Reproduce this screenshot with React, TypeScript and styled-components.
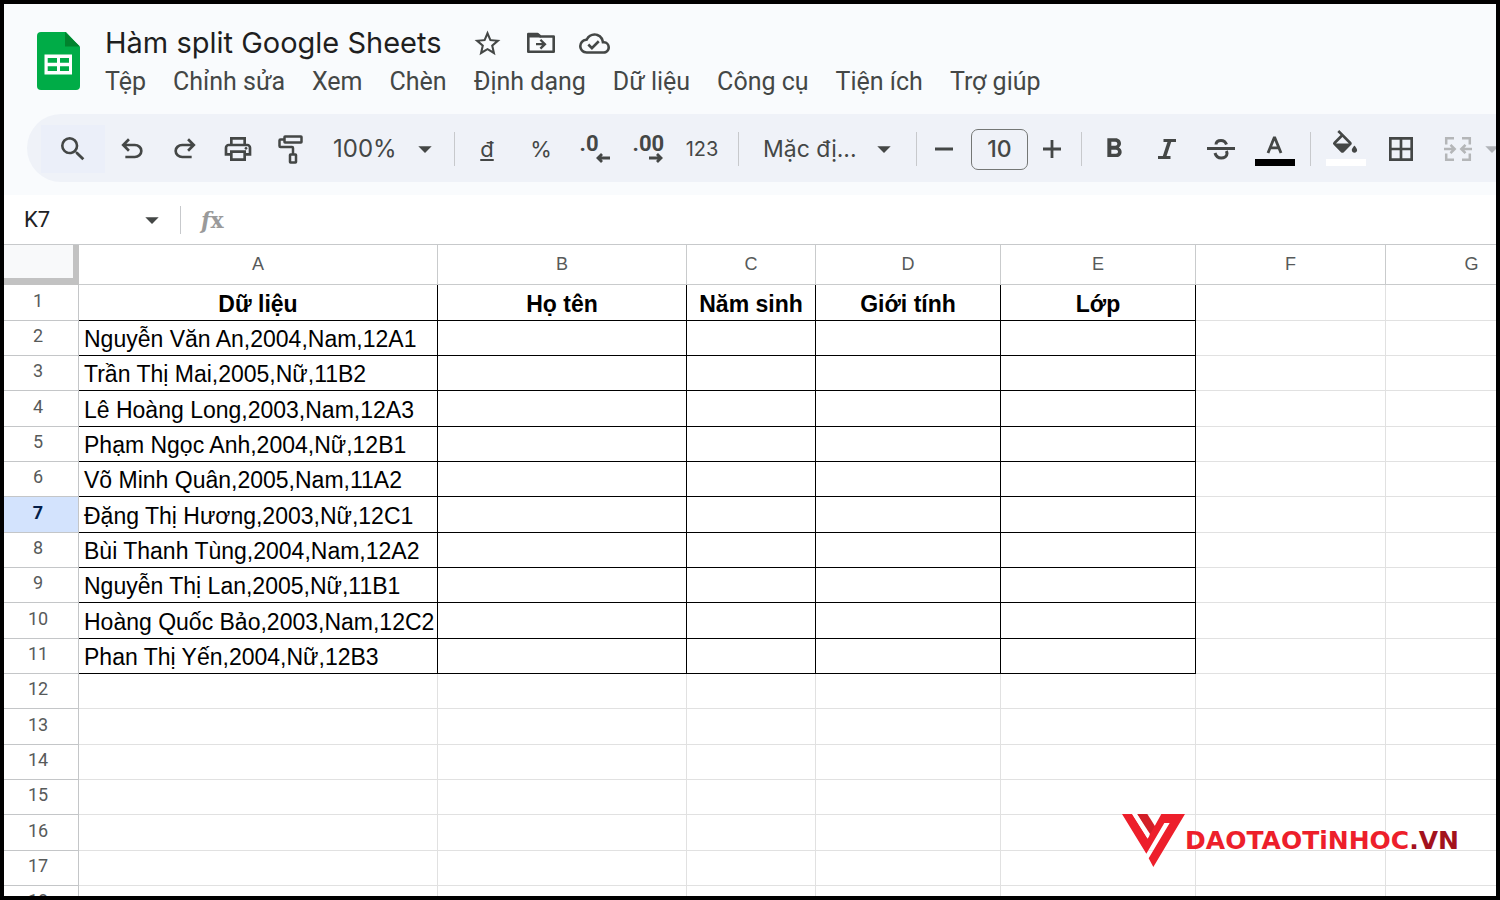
import React from 'react';
import styled, { createGlobalStyle, css } from 'styled-components';
import {
  MdArrowDropDown,
  MdBorderAll,
  MdFormatBold,
  MdOutlineCloudDone,
  MdOutlinePrint,
  MdSearch,
  MdStarBorder,
} from 'react-icons/md';

const GlobalStyle = createGlobalStyle`
  *, *::before, *::after { box-sizing: border-box; }
  body { margin: 0; background: #fff; }
  button, input, select { font: inherit; color: inherit; }
`;

const ui = `Roboto, 'Liberation Sans', sans-serif`;
const display = `Inter, Roboto, sans-serif`;
const ink = '#444746';

const Frame = styled.div`
  display: flex;
  flex-direction: column;
  position: relative;
  height: 100vh;
  overflow: hidden;
  border: 4px solid #000;
  background: #fff;
  color: ${ink};
  font-family: ${ui};
`;

const Top = styled.header`
  flex: none;
  padding: 22px 0 13px;
  background: #f9fbfd;
`;

const Brand = styled.div`
  display: flex;
  align-items: center;
  gap: 24px;
  padding-left: 33px;
  height: 78px;
`;

const Heading = styled.div`
  display: flex;
  flex-direction: column;
`;

const TitleRow = styled.div`
  display: flex;
  align-items: center;
  gap: 24px;
  height: 34px;
`;

const Title = styled.h1`
  margin: 0 6px 0 0;
  font: 400 29px/34px ${display};
  color: #1f1f1f;
  white-space: nowrap;
`;

const PlainButton = styled.button`
  display: flex;
  align-items: center;
  justify-content: center;
  padding: 0;
  border: 0;
  background: none;
  white-space: nowrap;
  > svg { flex: none; }
`;

const Menu = styled.nav`
  display: flex;
  gap: 27px;
  height: 44px;
`;

const MenuItem = styled(PlainButton)`
  font-size: 25px;
  line-height: 40px;
  color: #444746;
`;

const Toolbar = styled.div`
  display: flex;
  align-items: center;
  margin: 10px 0 0 23px;
  height: 68px;
  padding: 2px 0 0 14px;
  border-radius: 34px 0 0 34px;
  background: #eff2f8;
  overflow: hidden;
`;

const Tool = styled(PlainButton)<{ $w?: number; $size?: number; $lit?: boolean; $dim?: boolean }>`
  flex: none;
  width: ${p => p.$w ?? 54}px;
  height: 48px;
  font-family: ${display};
  font-size: ${p => p.$size ?? 20}px;
  background: ${p => (p.$lit ? '#ebeff9' : 'none')};
  color: ${p => (p.$dim ? '#b0b3b8' : ink)};
`;

const Divider = styled.span<{ $gap?: number; $h?: number }>`
  flex: none;
  width: 1px;
  height: ${p => p.$h ?? 34}px;
  margin: 0 ${p => p.$gap ?? 0}px;
  background: #c7c9cc;
`;

const Picker = styled.label<{ $w: number; $end: number; $size: number }>`
  flex: none;
  display: grid;
  align-items: center;
  width: ${p => p.$w}px;
  padding: 0 ${p => p.$end}px 0 16px;
  font: ${p => p.$size}px/32px ${display};
  > * { grid-area: 1 / 1; }
  > svg { justify-self: end; pointer-events: none; }
`;

const Select = styled.select`
  appearance: none;
  width: 100%;
  padding: 0;
  border: 0;
  background: none;
`;

const SizeBox = styled.input`
  flex: none;
  width: 57px;
  height: 41px;
  padding: 0;
  border: 1px solid #747775;
  border-radius: 7px;
  background: none;
  font: 500 23px ${display};
  text-align: center;
`;

const Decimal = styled.span`
  display: flex;
  flex-direction: column;
  align-items: flex-start;
  width: 30px;
  font: 700 22px/18px ${ui};
  > svg { align-self: flex-end; }
`;

const FormulaBar = styled.div`
  flex: none;
  display: flex;
  align-items: center;
  height: 50px;
  border-bottom: 1px solid #c7c9cb;
  background: #fff;
`;

const NameBox = styled.input`
  width: 120px;
  padding: 0 0 0 20px;
  border: 0;
  font: 22px/28px ${ui};
  color: #202124;
`;

const Fx = styled.label`
  padding: 0 12px 0 20px;
  font: 700 22px/28px 'DejaVu Serif', serif;
  color: #9a9a9a;
`;

const FormulaInput = styled.input`
  flex: 1;
  min-width: 0;
  border: 0;
`;

const SheetArea = styled.main`
  flex: 1;
  min-height: 0;
  overflow: hidden;
`;

const Sheet = styled.table`
  width: 1554px;
  table-layout: fixed;
  border-collapse: separate;
  border-spacing: 0;
  tbody tr { height: 35px; }
  tbody tr:nth-child(3n + 1) { height: 36px; }
`;

const Corner = styled.td`
  height: 40px;
  padding: 0;
  border: solid #c2c2c2;
  border-width: 0 6px 7px 0;
  background: #f8f9fa;
`;

const ColHead = styled.th`
  padding: 0 0 2px;
  border: solid #c9cbcc;
  border-width: 0 1px 1px 0;
  font: 400 18px/24px 'Liberation Sans', sans-serif;
  color: #575a5a;
`;

const RowHead = styled.th<{ $active?: boolean }>`
  padding: 0 6px 4px 0;
  border: solid #c4c6c8;
  border-width: 0 1px 1px 0;
  font: 400 18px/24px ${ui};
  color: #575a5a;
  ${p => p.$active && css`
    background: #d3e3fd;
    color: #041e49;
    font-weight: 700;
  `}
`;

const Cell = styled.td<{ $boxed?: boolean; $head?: boolean }>`
  padding: 2px 0 0 5px;
  border: solid ${p => (p.$boxed ? '#000' : '#e1e1e1')};
  border-width: 0 1px 1px 0;
  font: 23px/24px 'Liberation Sans', Arial, sans-serif;
  color: #000;
  white-space: nowrap;
  ${p => p.$head && css`
    padding-left: 0;
    font-weight: 700;
    text-align: center;
  `}
`;

const Watermark = styled.div`
  position: absolute;
  right: 37px;
  bottom: 28px;
  display: flex;
  align-items: center;
  font: 700 25px/24px 'DejaVu Sans', sans-serif;
  color: #ed1f2b;
`;

const Tld = styled.span`
  color: #a3121d;
`;

const SheetsLogo = () => (
  <svg width="44" height="68" viewBox="0 0 44 68" aria-hidden="true">
    <path d="M4 1H29L43 16V55a4 4 0 0 1-4 4H4a4 4 0 0 1-4-4V5a4 4 0 0 1 4-4Z" fill="#00ac47" />
    <path d="M28 1 43 15.500H28Z" fill="#00832d" />
    <path fillRule="evenodd" fill="#fff" d="M7.500 23.500H35V43.500H7.500ZM10.700 27V31.800H20V27ZM23 27V31.800H32V27ZM10.700 35.200V40H20V35.200ZM23 35.200V40H32V35.200Z" />
  </svg>
);

const MoveFolder = () => (
  <svg width="28" height="22" viewBox="0 0 28 22" aria-hidden="true">
    <path d="M1.300 4V19.700H26.700V4.500H13.500L10.500 2H1.300Z" fill="none" stroke={ink} strokeWidth="2.600" strokeLinejoin="round" />
    <path d="M1 1.500H10.500L14 5.500H1ZM14.200 7 19.600 12.200 14.200 17.400 12.600 15.800 15 13.300H9V11.100H15L12.600 8.600Z" fill={ink} />
  </svg>
);

const UndoIcon = ({ flip }: { flip?: boolean }) => (
  <svg width="32" height="32" viewBox="0 -960 960 960" fill={ink} aria-hidden="true">
    <path
      transform={flip ? 'translate(960 0) scale(-1 1)' : undefined}
      d="M280-200v-80h284q63 0 109.500-40T720-420q0-60-46.500-100T564-560H312l104 104-56 56-200-200 200-200 56 56-104 104h252q97 0 169.500 63T800-420q0 94-72.500 157T564-200H280Z"
    />
  </svg>
);

const RollerIcon = () => (
  <svg width="26" height="32" viewBox="0 0 26 32" fill="none" stroke={ink} strokeWidth="2.500" aria-hidden="true">
    <rect x="6.500" y="3.500" width="17" height="6" rx="0.500" />
    <path d="M6.500 6.500H2.500a1 1 0 0 0-1 1V13a1 1 0 0 0 1 1H14a1 1 0 0 1 1 1V21" />
    <rect x="12" y="21.500" width="6" height="8" rx="0.500" />
  </svg>
);

const ArrowIcon = ({ flip }: { flip?: boolean }) => (
  <svg width="14" height="10" viewBox="0 0 14 10" fill="none" stroke={ink} strokeWidth="2.800" aria-hidden="true">
    <path d={flip ? 'M0 5H12M8 1 12 5 8 9' : 'M14 5H2M6 1 2 5 6 9'} />
  </svg>
);

const SignIcon = ({ plus }: { plus?: boolean }) => (
  <svg width="18" height="18" viewBox="0 0 18 18" stroke={ink} strokeWidth="2.800" aria-hidden="true">
    <path d={plus ? 'M0 9H18M9 0V18' : 'M0 9H18'} />
  </svg>
);

const ItalicIcon = () => (
  <svg width="18" height="22" viewBox="0 0 18 22" fill="none" stroke={ink} aria-hidden="true">
    <path d="M5.500 2.500H18M0 19.500H12.500" strokeWidth="3.200" />
    <path d="M11.800 2.500 6.200 19.500" strokeWidth="3.600" />
  </svg>
);

const StrikeIcon = () => (
  <svg width="28" height="24" viewBox="0 0 28 24" fill="none" stroke={ink} strokeWidth="3" aria-hidden="true">
    <path d="M0 11.500H28" />
    <path d="M19.500 7.500C18.500 4.500 16.500 3.400 14 3.400 11.500 3.400 9 4.500 9 7.500M8 16C9 19.500 11.500 21 14.200 21 17.500 21 20 19.300 20 16.500 20 15.500 19.800 15 19.300 14" />
  </svg>
);

const TextColorIcon = () => (
  <svg width="40" height="40" viewBox="0 0 40 40" aria-hidden="true">
    <path d="M13 24 19.500 8 26 24M15.500 18.800H23.500" fill="none" stroke={ink} strokeWidth="2.800" strokeLinejoin="bevel" />
    <rect y="30" width="40" height="7" fill="#000" />
  </svg>
);

const FillColorIcon = () => (
  <svg width="40" height="40" viewBox="0 0 40 40" aria-hidden="true">
    <path
      transform="translate(3 1) scale(1.340)"
      fill={ink}
      d="M16.560 8.940 7.620 0 6.210 1.410l2.380 2.380-5.150 5.150a1.490 1.490 0 0 0 0 2.120l5.500 5.500c.29.29.68.44 1.060.44s.77-.15 1.060-.44l5.500-5.500c.59-.58.59-1.530 0-2.120zM5.210 10 10 5.210 14.790 10H5.210zM19 11.500s-2 2.170-2 3.500c0 1.100.9 2 2 2s2-.9 2-2c0-1.330-2-3.500-2-3.500z"
    />
    <rect y="30" width="40" height="7" fill="#fff" />
  </svg>
);

const MergeIcon = () => (
  <svg width="28" height="26" viewBox="0 0 28 26" fill="none" stroke="#b4b6b8" strokeWidth="2.500" aria-hidden="true">
    <path d="M10 2.200H2.200V8.500M18 2.200H25.800V8.500M10 23.800H2.200V17.500M18 23.800H25.800V17.500" />
    <path d="M0 13H10M6.500 8.800 10.700 13 6.500 17.200M28 13H18M21.500 8.800 17.300 13 21.500 17.200" />
  </svg>
);

const VMark = () => (
  <svg width="63" height="54" viewBox="0 0 189 162" aria-hidden="true">
    <path fill="#d31f28" d="M45 0H76L100 38 84 66Z" />
    <path fill="#ed1f2b" d="M0 0H30L77 74 118 0H189L94 159 80 133 143 27H127L73 119Z" />
    <path fill="#fff" d="M31 0H45L84 60 76 72Z" />
  </svg>
);

const menus = ['Tệp', 'Chỉnh sửa', 'Xem', 'Chèn', 'Định dạng', 'Dữ liệu', 'Công cụ', 'Tiện ích', 'Trợ giúp'];

const columns = [
  { name: 'A', width: 359 },
  { name: 'B', width: 249 },
  { name: 'C', width: 129 },
  { name: 'D', width: 185 },
  { name: 'E', width: 195 },
  { name: 'F', width: 190 },
  { name: 'G', width: 172 },
];

const rows: string[][] = [
  ['Dữ liệu', 'Họ tên', 'Năm sinh', 'Giới tính', 'Lớp'],
  ['Nguyễn Văn An,2004,Nam,12A1'],
  ['Trần Thị Mai,2005,Nữ,11B2'],
  ['Lê Hoàng Long,2003,Nam,12A3'],
  ['Phạm Ngọc Anh,2004,Nữ,12B1'],
  ['Võ Minh Quân,2005,Nam,11A2'],
  ['Đặng Thị Hương,2003,Nữ,12C1'],
  ['Bùi Thanh Tùng,2004,Nam,12A2'],
  ['Nguyễn Thị Lan,2005,Nữ,11B1'],
  ['Hoàng Quốc Bảo,2003,Nam,12C2'],
  ['Phan Thị Yến,2004,Nữ,12B3'],
  [], [], [], [], [], [], [],
];

const activeRow = 6;

export default function App() {
  return (
    <Frame>
      <GlobalStyle />
      <Top>
        <Brand>
          <SheetsLogo />
          <Heading>
            <TitleRow>
              <Title>Hàm split Google Sheets</Title>
              <PlainButton aria-label="Gắn dấu sao"><MdStarBorder size={31} /></PlainButton>
              <PlainButton aria-label="Di chuyển"><MoveFolder /></PlainButton>
              <PlainButton aria-label="Trạng thái tài liệu"><MdOutlineCloudDone size={31} /></PlainButton>
            </TitleRow>
            <Menu>
              {menus.map(m => <MenuItem key={m}>{m}</MenuItem>)}
            </Menu>
          </Heading>
        </Brand>
        <Toolbar role="toolbar">
          <Tool $w={64} $lit aria-label="Tìm kiếm"><MdSearch size={32} /></Tool>
          <Tool $w={53} aria-label="Hủy"><UndoIcon /></Tool>
          <Tool $w={53} aria-label="Làm lại"><UndoIcon flip /></Tool>
          <Tool $w={53} aria-label="In"><MdOutlinePrint size={32} /></Tool>
          <Tool $w={53} aria-label="Sao chép định dạng"><RollerIcon /></Tool>
          <Picker $w={132} $end={8} $size={24}>
            <Select aria-label="Thu phóng"><option>100%</option></Select>
            <MdArrowDropDown size={32} />
          </Picker>
          <Divider $gap={5} />
          <Tool $size={22} aria-label="Tiền tệ"><u>đ</u></Tool>
          <Tool $size={22}>%</Tool>
          <Tool $w={53} aria-label="Giảm số chữ số thập phân"><Decimal>.0<ArrowIcon /></Decimal></Tool>
          <Tool $w={53} aria-label="Tăng số chữ số thập phân"><Decimal>.00<ArrowIcon flip /></Decimal></Tool>
          <Tool $w={56}>123</Tool>
          <Divider $gap={8} />
          <Picker $w={169} $end={16} $size={23}>
            <Select aria-label="Phông chữ"><option>Mặc đị...</option></Select>
            <MdArrowDropDown size={32} />
          </Picker>
          <Divider />
          <Tool aria-label="Giảm cỡ chữ"><SignIcon /></Tool>
          <SizeBox aria-label="Cỡ chữ" defaultValue="10" />
          <Tool $w={48} aria-label="Tăng cỡ chữ"><SignIcon plus /></Tool>
          <Divider $gap={5} />
          <Tool $w={53} aria-label="Đậm"><MdFormatBold size={32} /></Tool>
          <Tool aria-label="Nghiêng"><ItalicIcon /></Tool>
          <Tool aria-label="Gạch ngang"><StrikeIcon /></Tool>
          <Tool aria-label="Màu văn bản"><TextColorIcon /></Tool>
          <Divider $gap={8} />
          <Tool $w={53} aria-label="Màu nền"><FillColorIcon /></Tool>
          <Tool $w={57} aria-label="Đường viền"><MdBorderAll size={32} /></Tool>
          <Tool $w={57} $dim aria-label="Hợp nhất ô"><MergeIcon /></Tool>
          <Tool $w={12} $dim aria-label="Chọn kiểu hợp nhất"><MdArrowDropDown size={32} /></Tool>
        </Toolbar>
      </Top>
      <FormulaBar>
        <NameBox aria-label="Hộp tên" defaultValue="K7" />
        <Tool $w={56} aria-label="Danh sách tên"><MdArrowDropDown size={32} /></Tool>
        <Divider $h={28} />
        <Fx htmlFor="formula"><em>f</em>x</Fx>
        <FormulaInput id="formula" />
      </FormulaBar>
      <SheetArea>
        <Sheet>
          <colgroup>
            <col width={75} />
            {columns.map(c => <col key={c.name} width={c.width} />)}
          </colgroup>
          <thead>
            <tr>
              <Corner />
              {columns.map(c => <ColHead key={c.name} scope="col">{c.name}</ColHead>)}
            </tr>
          </thead>
          <tbody>
            {rows.map((row, r) => (
              <tr key={r}>
                <RowHead scope="row" $active={r === activeRow}>{r + 1}</RowHead>
                {columns.map((c, i) => (
                  <Cell key={c.name} $boxed={r < 11 && i < 5} $head={r === 0}>{row[i]}</Cell>
                ))}
              </tr>
            ))}
          </tbody>
        </Sheet>
      </SheetArea>
      <Watermark>
        <VMark />
        <span>DAOTAOTiNHOC<Tld>.VN</Tld></span>
      </Watermark>
    </Frame>
  );
}
